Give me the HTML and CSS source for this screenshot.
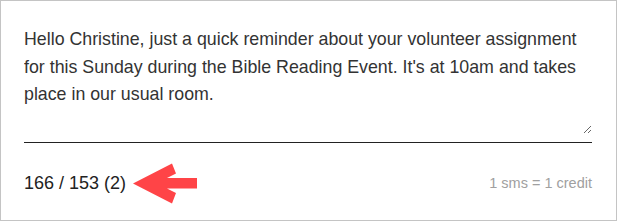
FILE: index.html
```html
<!DOCTYPE html>
<html lang="en">
<head>
<meta charset="utf-8">
<link rel="stylesheet" href="styles.css">
</head>
<body>
<div class="card">
  <div class="field">
    <textarea class="message" spellcheck="false">Hello Christine, just a quick reminder about your volunteer assignment for this Sunday during the Bible Reading Event. It's at 10am and takes place in our usual room.</textarea>
  </div>
  <div class="footer">
    <div class="counter">
      <span class="count">166 / 153 (2)</span>
      <svg class="arrow" width="72" height="48" viewBox="0 0 72 48" aria-hidden="true">
        <polygon points="4,24.5 43,4.5 47,14.5 38,19 68,19 68,29.5 38,29.5 47,34 43,44.5" fill="#ff4447"/>
      </svg>
    </div>
    <span class="note">1 sms = 1 credit</span>
  </div>
</div>
</body>
</html>
```
FILE: styles.css
```css
html, body {
  margin: 0;
  padding: 0;
  background: #ffffff;
}
.card {
  box-sizing: border-box;
  width: 617px;
  height: 221px;
  border: 1px solid #c4c4c4;
  padding: 25px 24px 0 23px;
  font-family: "Liberation Sans", Arial, sans-serif;
}
.field {
  border-bottom: 1px solid #222222;
  padding-bottom: 8px;
}
.message {
  display: block;
  box-sizing: content-box;
  width: 568px;
  height: 108px;
  margin: 0;
  padding: 0;
  border: none;
  outline: none;
  resize: vertical;
  overflow: hidden;
  background: transparent;
  font-family: "Liberation Sans", Arial, sans-serif;
  font-size: 17.8px;
  line-height: 27.5px;
  color: #333333;
}
.footer {
  display: flex;
  justify-content: space-between;
  align-items: center;
  padding-top: 16px;
}
.counter {
  display: flex;
  align-items: center;
  gap: 3px;
}
.count {
  font-size: 18px;
  line-height: 20px;
  color: #222222;
}
.arrow {
  display: block;
}
.note {
  font-size: 14.5px;
  line-height: 16px;
  color: #a0a0a0;
}
```
